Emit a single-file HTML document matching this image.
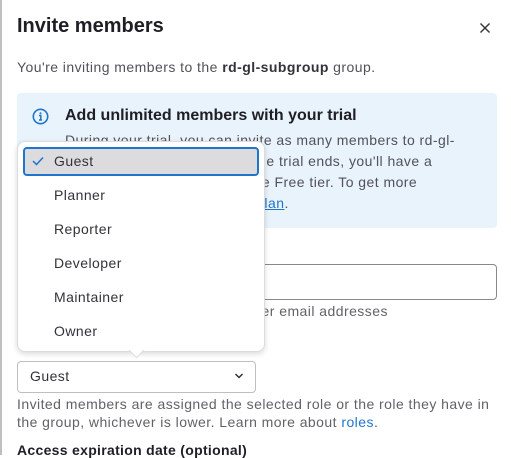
<!DOCTYPE html>
<html><head><style>
body{margin:0;width:511px;height:455px;overflow:hidden;background:#fff;font-family:"Liberation Sans",sans-serif;color:#333238;position:relative}
.a{position:absolute}
.t{font-size:14px;letter-spacing:0.45px}
</style></head><body>
<div class="a" style="left:0;top:0;width:2px;height:455px;background:#bfbfc3"></div>
<div class="a" style="left:17px;top:15px;font-size:20px;font-weight:bold;color:#1f1e24">Invite members</div>
<svg class="a" style="left:479px;top:22px" width="12" height="12" viewBox="0 0 12 12"><path d="M1.5 1.5L10.5 10.5M10.5 1.5L1.5 10.5" stroke="#333" stroke-width="1.4"/></svg>
<div class="a t" style="left:17px;top:59px;color:#535158">You're inviting members to the <b style="color:#333238">rd-gl-subgroup</b> group.</div>
<div class="a" style="left:17px;top:93px;width:480px;height:135px;background:#e9f3fc;border-radius:4px"></div>
<svg class="a" style="left:32px;top:108px" width="17" height="17" viewBox="0 0 17 17"><circle cx="8.5" cy="8.5" r="7.2" fill="none" stroke="#1f75cb" stroke-width="1.6"/><circle cx="8.5" cy="5.2" r="1" fill="#1f75cb"/><path d="M7 7.5h1.8v4.5M7 12h3" stroke="#1f75cb" stroke-width="1.5" fill="none"/></svg>
<div class="a" style="left:65px;top:107px;font-size:16px;font-weight:bold;color:#1f1e24">Add unlimited members with your trial</div>
<div class="a t" style="left:65px;top:130px;line-height:21px;color:#535158;width:430px">During your trial, you can invite as many members to rd-gl-<br>subgroup as you like. When the trial ends, you'll have a<br>maximum of 5 members on the Free tier. To get more<br>members, upgrade to a paid <span style="color:#1f75cb;text-decoration:underline">plan</span>.</div>
<div class="a" style="left:17px;top:264px;width:478px;height:34px;border:1px solid #89888d;border-radius:4px"></div>
<div class="a t" style="left:17px;top:303px;color:#626168">Select from GitLab usernames or enter email addresses</div>
<div class="a" style="left:17px;top:361px;width:237px;height:30px;border:1px solid #bfbfc3;border-radius:4px"></div>
<div class="a t" style="left:30px;top:368px;color:#333238">Guest</div>
<svg class="a" style="left:234px;top:372px" width="10" height="8" viewBox="0 0 10 8"><path d="M1.5 2L5 5.5L8.5 2" stroke="#333" stroke-width="1.5" fill="none"/></svg>
<div class="a t" style="left:17px;top:395px;line-height:18px;color:#626168;white-space:nowrap">Invited members are assigned the selected role or the role they have in<br>the group, whichever is lower. Learn more about <span style="color:#1f75cb">roles</span>.</div>
<div class="a" style="left:17px;top:442px;font-size:14px;font-weight:bold;color:#1f1e24;letter-spacing:0.3px">Access expiration date (optional)</div>
<div class="a" style="left:17px;top:141px;width:246px;height:209px;background:#fff;border:1px solid #dcdcde;border-radius:8px;box-shadow:0 2px 6px rgba(0,0,0,.15)"></div>
<div class="a" style="left:131px;top:345px;width:10px;height:10px;background:#fff;transform:rotate(45deg);border-right:1px solid #dcdcde;border-bottom:1px solid #dcdcde"></div>
<div class="a" style="left:23px;top:147px;width:232px;height:25px;background:#dcdcde;border:2px solid #1f75cb;border-radius:4px"></div>
<svg class="a" style="left:32px;top:156px" width="12" height="10" viewBox="0 0 12 10"><path d="M1 5L4.5 8.5L11 1.5" stroke="#1f75cb" stroke-width="1.5" fill="none"/></svg>
<div class="a t" style="left:54px;top:144px;line-height:34px;color:#333238">Guest<br>Planner<br>Reporter<br>Developer<br>Maintainer<br>Owner</div>
</body></html>
